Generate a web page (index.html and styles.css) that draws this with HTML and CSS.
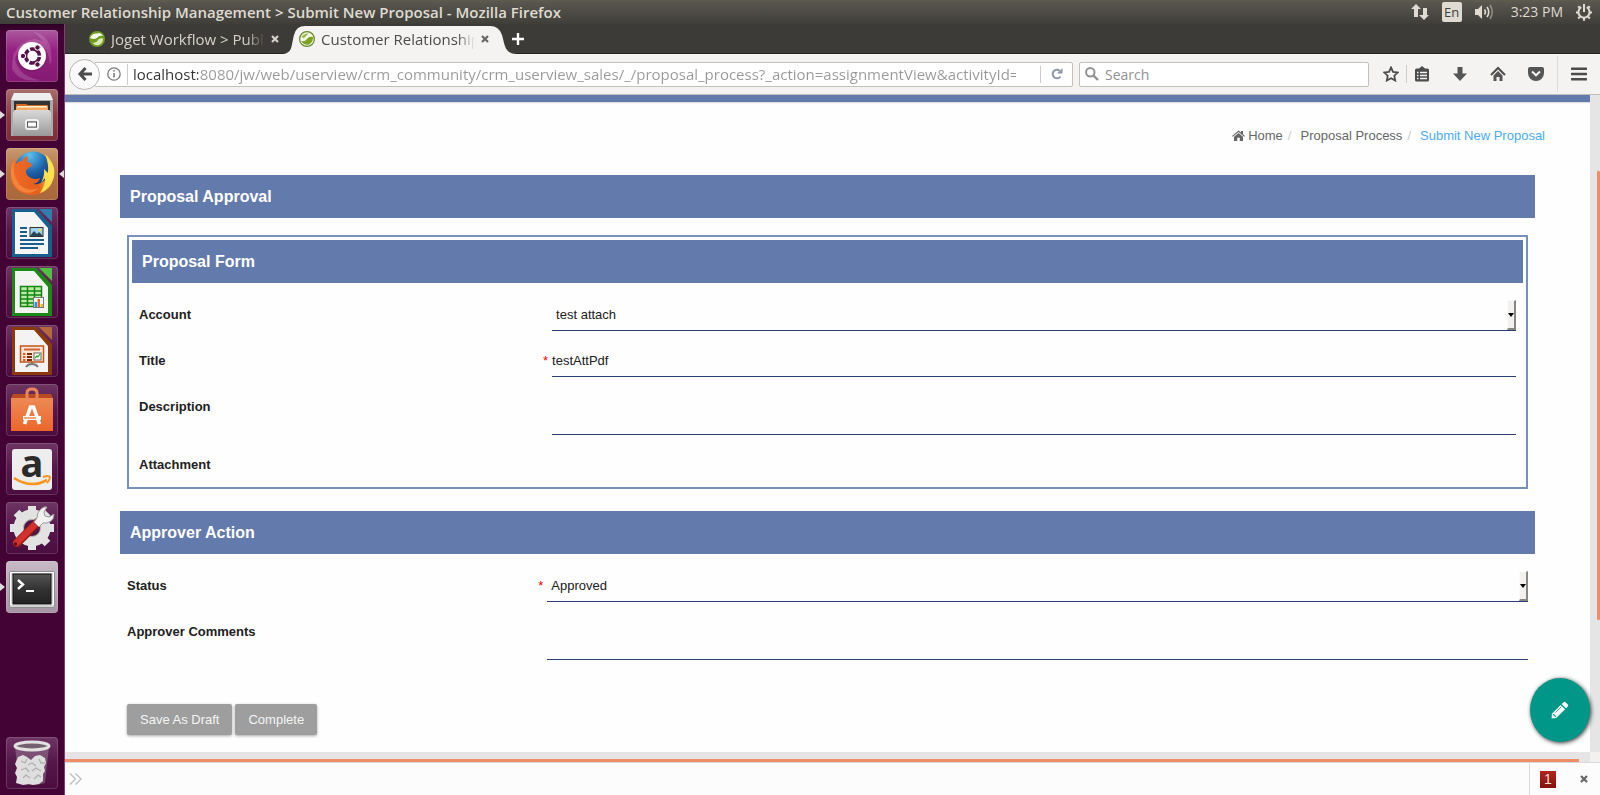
FILE: index.html
```html
<!DOCTYPE html>
<html lang="en">
<head>
<meta charset="utf-8">
<title>Customer Relationship Management &gt; Submit New Proposal</title>
<link rel="stylesheet" href="styles.css">
</head>
<body>
<div class="desktop">
  <header class="panel">
    <span class="panel-title">Customer Relationship Management &gt; Submit New Proposal - Mozilla Firefox</span>
    <div class="indicators">
      <svg class="ind-net" width="18" height="18" viewBox="0 0 18 18"><path fill="#dfdbd2" d="M5 1l5 5H7v8H3V6H0zM12 5h4v7h2l-5 5-5-5h4z"/></svg>
      <span class="lang">En</span>
      <svg class="ind-vol" width="20" height="18" viewBox="0 0 20 18"><path fill="#dfdbd2" d="M0 6h3l4-4v14l-4-4H0z"/><g fill="none" stroke="#dfdbd2" stroke-width="1.6"><path d="M9.500 6.500q2 2.500 0 5"/><path d="M12 4q3.500 5 0 10"/><path d="M15 2q4.500 7 0 14" opacity=".45"/></g></svg>
      <time class="clock">3:23 PM</time>
      <svg class="ind-gear" width="18" height="18" viewBox="0 0 18 18" fill="none" stroke="#dfdbd2"><path stroke-width="2" d="M6.300 4.200a5.600 5.600 0 1 0 5.400 0M9 1v8"/><path stroke-width="2.200" d="M3.200 3.200l1.600 1.600M14.800 3.200l-1.600 1.600M1 9.500h2.500M14.500 9.500H17M3.200 15.500l1.700-1.700M14.800 15.500l-1.700-1.700M9 15v2.800"/></svg>
    </div>
  </header>

  <nav class="launcher" aria-label="Launcher">
    <button class="tile tile-dash" aria-label="Dash">
      <svg viewBox="0 0 52 52"><g fill="#e8b8df" opacity=".22"><path d="M7 42Q3 14 28 9q20 2 17 26-2-20-19-22Q8 16 7 42z"/><path d="M26 1q24 6 18 34-2-24-18-34z"/><path d="M8 20q0 26 26 30-22 3-28-12z"/></g><circle cx="26" cy="27" r="14.500" fill="#5d1550" opacity=".4"/><circle cx="26" cy="26" r="14" fill="#fff"/><circle cx="26.500" cy="26" r="7" fill="none" stroke="#571349" stroke-width="3.600" stroke-dasharray="13 1.660" stroke-dashoffset="-1"/><g fill="#571349" stroke="#fff"><circle cx="17" cy="26" r="2.700"/><circle cx="31.500" cy="17.500" r="2.700"/><circle cx="31.500" cy="34.500" r="2.700"/></g></svg>
    </button>
    <button class="tile tile-files running" aria-label="Files">
      <svg viewBox="0 0 52 52"><defs><linearGradient id="cab" x2="0" y2="1"><stop stop-color="#d9d9d9"/><stop offset="1" stop-color="#999"/></linearGradient></defs><path d="M8 4h36l3 7v36H5V11z" fill="#aaa"/><path d="M8 4h36l3 7H5z" fill="#eee"/><path d="M8 12h36v12H8z" fill="#333"/><path d="M10 15h10l2 1h20v8H10z" fill="#d66a20"/><path d="M10 18h32v6H10z" fill="#f8a95c"/><path d="M11 17h30v1.500H11z" fill="#fff1d8"/><path d="M7 24l1.500-3h35l1.500 3v23H7z" fill="url(#cab)"/><rect x="20" y="31" width="12" height="9" rx="2" fill="#bbb" stroke="#f1f1f1" stroke-width="2"/><rect x="21.500" y="33" width="9" height="5" fill="#fff" stroke="#555"/></svg>
    </button>
    <button class="tile tile-firefox running active" aria-label="Firefox">
      <svg viewBox="0 0 52 52"><defs><radialGradient id="sea" cx=".4" cy=".1" r=".8"><stop stop-color="#5cc3ee"/><stop offset=".6" stop-color="#1c5fa8"/><stop offset="1" stop-color="#123a80"/></radialGradient><linearGradient id="fox" x1="0" x2="1"><stop stop-color="#f0692a"/><stop offset=".65" stop-color="#e3601b"/><stop offset="1" stop-color="#ffcf3b"/></linearGradient></defs><circle cx="27" cy="22" r="18.500" fill="url(#sea)"/><path d="M9 10q-6 10-4 20 3 16 21 17 17-1 21-16 2-8-1-16-1 11-7 17-5 5-12 4 6-1 7-6-4 2-9 0-6-3-5-8 3-3 6-4-1-4-5-4l1-6q-4 1-6 5-4 0-6 3z" fill="url(#fox)"/><path d="M39 6q13 12 8 26-4 10-13 13 6-9 5-15l-4 5q4-8 3-14l4 4q1-9-3-19z" fill="#ffe04c"/><path d="M9 11q-4 14 4 25 9 9 20 4-10 9-21 1Q2 32 6 17z" fill="#f5843a"/></svg>
    </button>
    <button class="tile" aria-label="LibreOffice Writer">
      <svg viewBox="0 0 52 52"><path d="M6 2h24l16 17v31H6z" fill="#165f8f"/><path d="M9 5h19l14 16v26H9z" fill="#f5f5f5"/><path d="M33 2h13v13z" fill="#2f7fae"/><path d="M14 21h7M14 25h7M14 29h7M14 33h24M14 37h24M14 41h18" stroke="#165f8f" stroke-width="2"/><rect x="24" y="20.500" width="13" height="9" fill="#9fd2ee" stroke="#333"/><path d="M24 29l4-5 3 3 2-2 4 4z" fill="#254757"/><circle cx="34" cy="23" r="1.300" fill="#ffd84a"/></svg>
    </button>
    <button class="tile" aria-label="LibreOffice Calc">
      <svg viewBox="0 0 52 52"><path d="M6 2h24l16 17v31H6z" fill="#1a8a15"/><path d="M9 5h19l14 16v26H9z" fill="#f3f3f3"/><path d="M33 2h13v13z" fill="#4fc043"/><path d="M14.500 20.500h21v20h-21z" fill="#b4efa5"/><path d="M14.500 20.500h21v20h-21zM14 25h22M14 29h22M14 33h22M14 37h22M21.500 20v21M28.500 20v21" fill="none" stroke="#178312" stroke-width="1.500"/><rect x="27.500" y="31.500" width="10" height="10" fill="#fff" stroke="#777"/><path d="M28.500 36h2.500v5h-2.500z" fill="#2692dc"/><path d="M31.500 33h2.500v8h-2.500z" fill="#e5662a"/><path d="M34.500 38H37v3h-2.500z" fill="#f1bf18"/></svg>
    </button>
    <button class="tile" aria-label="LibreOffice Impress">
      <svg viewBox="0 0 52 52"><path d="M6 2h24l16 17v31H6z" fill="#8c3a0b"/><path d="M9 5h19l14 16v26H9z" fill="#f3f3f3"/><path d="M33 2h13v13z" fill="#b56a3c"/><rect x="14.500" y="21" width="23" height="16" fill="#fbe5d6" stroke="#c4541a" stroke-width="1.500"/><path d="M18 24.500h16" stroke="#d4642c" stroke-width="2"/><path d="M17 29h2.500M17 32h2.500M17 35h2.500" stroke="#d4642c" stroke-width="1.800"/><path d="M21 29h5M21 32h5M21 35h5" stroke="#7d2b06" stroke-width="1.800"/><rect x="28" y="28" width="7" height="7" fill="#fff" stroke="#666"/><path d="M29 33l2-2 1 1 2-3" fill="none" stroke="#2eaa30" stroke-width="1.300"/><path d="M26 37v3M20 42q2-3 6-3t6 3" fill="none" stroke="#777" stroke-width="2"/></svg>
    </button>
    <button class="tile" aria-label="Ubuntu Software">
      <svg viewBox="0 0 52 52"><defs><linearGradient id="bag" x2="0" y2="1"><stop stop-color="#ee8a54"/><stop offset="1" stop-color="#ec662b"/></linearGradient></defs><path d="M7 10h38l2 4H5z" fill="#b94a1f"/><path d="M5 14h42v33H5z" fill="url(#bag)"/><path d="M21 17V9q0-4 5-4t5 4v8" fill="none" stroke="#e8875c" stroke-width="3"/><path d="M18.500 40l6-17h3l6 17" fill="none" stroke="#fff" stroke-width="3.600"/><path d="M17 34h18" stroke="#fff" stroke-width="4"/><path d="M18 34h12" stroke="#ec6b32" stroke-width="1.200"/></svg>
    </button>
    <button class="tile" aria-label="Amazon">
      <svg viewBox="0 0 52 52"><rect x="6" y="6" width="40" height="41" rx="3" fill="#ededed"/><text x="26" y="34" text-anchor="middle" class="amazon-letter">a</text><path d="M8 35q17 11 33 2" fill="none" stroke="#f7941d" stroke-width="2.600"/><path d="M37 34q6-2 7 0 0 3-3 6" fill="none" stroke="#f7941d" stroke-width="2"/></svg>
    </button>
    <button class="tile" aria-label="System Settings">
      <svg viewBox="0 0 52 52"><circle cx="26" cy="26" r="13.500" fill="none" stroke="#e2e2e2" stroke-width="10"/><g stroke="#e2e2e2" stroke-width="8"><path d="M26 4v8M26 40v8M4 26h8M40 26h8M10.500 10.500l5.500 5.500M36 36l5.500 5.500M10.500 41.500l5.500-5.500M36 16l5.500-5.500"/></g><circle cx="26" cy="26" r="8.500" fill="#4f1745" stroke="#bbb"/><path d="M32 20L11 41" stroke="#8f1712" stroke-width="8.500" stroke-linecap="round"/><path d="M31.500 20L10.500 41" stroke="#d2322b" stroke-width="6.500" stroke-linecap="round"/><circle cx="9.500" cy="42" r="1.700" fill="#5e0e0b"/><path d="M31 16q0-6 4-9 3-3 6-2l-3 5 1 4 4 1 5-3q0 5-3 7-4 3-8 2l-4 4-5-5z" fill="#f1f1f1" stroke="#999"/></svg>
    </button>
    <button class="tile tile-term running" aria-label="Terminal">
      <svg viewBox="0 0 52 52"><defs><linearGradient id="scr" x2="0" y2="1"><stop stop-color="#555"/><stop offset=".5" stop-color="#333"/><stop offset="1" stop-color="#222"/></linearGradient></defs><rect x="3.500" y="10.500" width="45" height="36" rx="1" fill="#d3d3d3" stroke="#8e8e8e"/><path d="M4.500 11.500h43v32h-43z" fill="none" stroke="#fff"/><rect x="7" y="13" width="38" height="30" fill="url(#scr)" stroke="#111"/><path d="M12 19l5 4.500-5 4.500" fill="none" stroke="#fff" stroke-width="2.400"/><path d="M20 30h8" stroke="#fff" stroke-width="2"/></svg>
    </button>
    <button class="tile tile-trash" aria-label="Trash">
      <svg viewBox="0 0 52 52"><path d="M9 10l4 36q13 4 26 0l4-36z" fill="#bba9b8" opacity=".35"/><path d="M12 20l5-2 4 2 4 3 4-4 5-1 5 3 1 5-2 4 1 4-2 3v7l-4 3-6 1-4-1-6 1-7-2 1-6-2-4 2-5-2-4z" fill="#dedede"/><path d="M15 24l4 2 2-4M22 28l4-2 4 3M33 22l2 4 4 0M15 33l5-2 3 4M26 34l4-3 5 3M17 41l3-3 4 3M28 42l4-4 3 2" fill="none" stroke="#b0b0b0" stroke-width="1.300"/><ellipse cx="26" cy="9" rx="17" ry="4" fill="#72616f" stroke="#e2e2e2" stroke-width="3"/></svg>
    </button>
  </nav>

  <div class="browser">
    <div class="tabs">
      <div class="tab">
        <svg class="favicon" viewBox="0 0 16 16"><circle cx="8" cy="8" r="8" fill="#6f9a22"/><path d="M1 7Q3 2 8 2.500 12 1 14 5q-4-1-6 2-3 2-7 0z" fill="#f5f8e8"/><path d="M3 11.500q2 1 5-1 2-4 6-3 .500 4-4 6.500-4 1-7-2.500z" fill="#dfe9b4"/></svg>
        <span class="tab-title">Joget Workflow &gt; Public</span>
        <button class="tab-close" aria-label="Close tab"><svg viewBox="0 0 8 8"><path d="M1 1l6 6M7 1L1 7" stroke="currentColor" stroke-width="2.200"/></svg></button>
      </div>
      <div class="tab tab-active">
        <svg class="tab-shape" width="236" height="28" viewBox="0 0 236 28" preserveAspectRatio="none"><path d="M0 28C12 28 10 20 13 9q2-9 11-9h185q9 0 12 9c3 11 3 19 15 19z" fill="#f4f3f2"/></svg>
        <svg class="favicon" viewBox="0 0 16 16"><circle cx="8" cy="8" r="7.400" fill="#f3f6e4" stroke="#64872b" stroke-width="1.200"/><path d="M2 10q4 1 6-2 2-3 6-2 .500 5-4 7.500-5 1-8-3.500z" fill="#7ea11f"/><path d="M2.500 6q3-4 7-3.500L7 5 5 7z" fill="#93b545"/></svg>
        <span class="tab-title">Customer Relationship</span>
        <button class="tab-close" aria-label="Close tab"><svg viewBox="0 0 8 8"><path d="M1 1l6 6M7 1L1 7" stroke="currentColor" stroke-width="2.200"/></svg></button>
      </div>
      <button class="new-tab" aria-label="New tab"><svg viewBox="0 0 14 14"><path d="M7 1v12M1 7h12" stroke="#fff" stroke-width="2.400"/></svg></button>
    </div>

    <div class="toolbar">
      <button class="back" aria-label="Back"><svg viewBox="0 0 16 16"><path d="M8.500 2L3 8l5.500 6M3 8h12" fill="none" stroke="#4c4c4c" stroke-width="3"/></svg></button>
      <div class="urlbar">
        <svg class="info" viewBox="0 0 14 14"><circle cx="7" cy="7" r="6.200" fill="none" stroke="#7b7b7b" stroke-width="1.300"/><path d="M7 6v4.500M7 3v1.600" stroke="#7b7b7b" stroke-width="1.600"/></svg>
        <input class="url" type="text" aria-label="Address" value="localhost:8080/jw/web/userview/crm_community/crm_userview_sales/_/proposal_process?_action=assignmentView&amp;activityId=4">
        <button class="reload" aria-label="Reload"><svg viewBox="0 0 12 12"><path d="M9.500 8.500A4.300 4.300 0 1 1 8.600 2.600" fill="none" stroke="#8a97a6" stroke-width="2"/><path d="M11.500 0v5.500H6z" fill="#8a97a6"/></svg></button>
      </div>
      <label class="searchbar">
        <svg viewBox="0 0 14 14"><circle cx="5.300" cy="5.300" r="4.200" fill="none" stroke="#929292" stroke-width="2"/><path d="M8.300 8.300l4.700 4.700" stroke="#929292" stroke-width="2.400"/></svg>
        <input type="text" placeholder="Search" aria-label="Search">
      </label>
      <div class="tools">
        <button class="tool" aria-label="Bookmark"><svg viewBox="0 0 16 16"><path d="M8 1.500l2 4.300 4.800.6-3.500 3.300.9 4.800L8 12.200l-4.200 2.300.9-4.800L1.200 6.400 6 5.800z" fill="none" stroke="#4c4c4c" stroke-width="1.800"/></svg></button>
        <button class="tool tool-list" aria-label="Bookmarks list"><svg viewBox="0 0 16 16"><path d="M8 0l3 2.500h2.500q1.500 0 1.500 1.500v10q0 1.500-1.500 1.500h-11Q1 15.500 1 14V4q0-1.500 1.500-1.500H5z" fill="#4c4c4c"/><path d="M3 6.500h1.500M6 6.500h7M3 9.500h1.500M6 9.500h7M3 12.500h1.500M6 12.500h7" stroke="#f4f3f2" stroke-width="1.600"/></svg></button>
        <button class="tool" aria-label="Downloads"><svg viewBox="0 0 16 16"><path d="M5.500 1h5v6.500H15L8 15 1 7.500h4.500z" fill="#555"/></svg></button>
        <button class="tool" aria-label="Home page"><svg viewBox="0 0 16 16"><path d="M1 9l7-7 7 7" fill="none" stroke="#4c4c4c" stroke-width="2"/><path d="M3.500 9.500L8 5l4.500 4.500V15H9.500v-4h-3v4h-3z" fill="#555"/></svg></button>
        <button class="tool" aria-label="Pocket"><svg viewBox="0 0 16 16"><path d="M2 1h12q2 0 2 2v4a8 8 0 0 1-16 0V3q0-2 2-2z" fill="#555"/><path d="M4 5.500L8 9.300l4-3.800" fill="none" stroke="#f4f3f2" stroke-width="2"/></svg></button>
        <button class="tool tool-menu" aria-label="Menu"><svg viewBox="0 0 16 16"><path d="M1 2.800h14M1 8h14M1 13.200h14" stroke="#4c4c4c" stroke-width="2.600" stroke-linecap="round"/></svg></button>
      </div>
    </div>

    <div class="viewport">
      <main class="page">
        <div class="page-bar"></div>
        <nav class="crumbs" aria-label="Breadcrumb">
          <a href="#home"><svg viewBox="0 0 13 11"><path d="M0 6l6.500-5.500L9 2.600V1h2v3.300L13 6l-.7.800-5.800-4.900L.7 6.800z" fill="#666"/><path d="M2 6.800L6.500 3 11 6.800V11H7.800V7.800H5.200V11H2z" fill="#666"/></svg>Home</a><span class="slash">/</span><a href="#process">Proposal Process</a><span class="slash">/</span><a class="current" href="#submit">Submit New Proposal</a>
        </nav>
        <form class="form">
          <h2 class="bar">Proposal Approval</h2>
          <section class="subform">
            <h3 class="bar">Proposal Form</h3>
            <div class="rows">
              <div class="row"><label for="account">Account</label><span class="req"></span><span class="pick"><select id="account"><option>test attach</option></select></span></div>
              <div class="row"><label for="title">Title</label><span class="req">*</span><input class="line" id="title" type="text" value="testAttPdf"></div>
              <div class="row"><label for="description">Description</label><span class="req"></span><textarea class="line" id="description"></textarea></div>
              <div class="row"><span class="label">Attachment</span></div>
            </div>
          </section>
          <h2 class="bar">Approver Action</h2>
          <div class="rows rows-outer">
            <div class="row"><label for="status">Status</label><span class="req">*</span><span class="pick"><select id="status"><option>Approved</option></select></span></div>
            <div class="row"><label for="comments">Approver Comments</label><span class="req"></span><textarea class="line" id="comments"></textarea></div>
          </div>
          <div class="actions">
            <button class="btn" type="button">Save As Draft</button>
            <button class="btn" type="button">Complete</button>
          </div>
        </form>
      </main>
      <div class="vscroll"><div class="vthumb"></div></div>
      <div class="hscroll"><div class="hthumb"></div></div>
      <div class="corner"></div>
      <button class="fab" aria-label="Edit"><svg viewBox="0 0 18 18"><path d="M12.500 1.200q1-1 2 0l2.300 2.300q1 1 0 2L15 7.300 10.700 3z" fill="#fff"/><path d="M9.800 3.900l4.300 4.300-8.900 8.900L.6 17.400l.3-4.600z" fill="#fff"/><path d="M4.500 11.500l6-6" stroke="#009688" stroke-width=".8"/><path d="M2.200 13.200l2.600 2.600" stroke="#009688" stroke-width="1.200"/></svg></button>
    </div>

    <footer class="addonbar">
      <svg class="chev" viewBox="0 0 14 12"><path d="M1 0l6 6-6 6M7 0l6 6-6 6" fill="none" stroke="#bdbdbd" stroke-width="1.400"/></svg>
      <div class="addon-right"><span class="errors">1</span><button class="bar-close" aria-label="Close bar"><svg viewBox="0 0 8 8"><path d="M1 1l6 6M7 1L1 7" stroke="#666" stroke-width="2.200"/></svg></button></div>
    </footer>
  </div>
</div>
</body>
</html>
```

FILE: styles.css
```css
*, *::before, *::after { box-sizing: border-box; }
html, body { height: 100%; margin: 0; }
body { overflow: hidden; font-family: "Liberation Sans", Arial, sans-serif; font-size: 13px; color: #212121; }
button { border: 0; padding: 0; background: none; font: inherit; color: inherit; }
input, select, textarea { font: inherit; color: inherit; border: 0; padding: 0; margin: 0; background: none; outline: 0; border-radius: 0; min-width: 0; }
svg { display: block; }
a { text-decoration: none; color: inherit; }

.desktop { display: grid; height: 100vh; grid-template: 24px minmax(0, 1fr) / 65px minmax(0, 1fr); }
.panel, .tabs, .toolbar { font-family: "Open Sans", "Noto Sans", sans-serif; }

/* Top panel */
.panel { grid-column: 1 / -1; display: flex; align-items: center; justify-content: space-between; padding: 0 7px 0 6px; background: linear-gradient(#5f5d50, #57554d 3px, #3f3e39); color: #dfdbd2; white-space: nowrap; }
.panel-title { font-size: 15px; font-weight: 600; line-height: 24px; }
.indicators { display: flex; align-items: center; }
.lang { margin: 0 13px; width: 20px; height: 20px; border-radius: 2px; background: #dfdbd2; color: #3f3e39; font-size: 13px; line-height: 20px; text-align: center; }
.clock { margin: 0 12px 0 16px; font-size: 14px; line-height: 24px; }

/* Launcher */
.launcher { display: flex; flex-direction: column; gap: 7px; padding: 6px; border-right: 1px solid #823d77; background: linear-gradient(#2d0124, #430335 8px); }
.tile { position: relative; width: 52px; height: 52px; flex: none; border-radius: 4px; background: linear-gradient(#6d3562, #55164a 50%, #4b0c3f); box-shadow: inset 0 0 0 1px rgba(255, 255, 255, .15); }
.tile svg { width: 52px; height: 52px; overflow: visible; }
.tile-dash { background: linear-gradient(#ab5a9e, #942080 40%, #841a73); }
.tile-files { background: linear-gradient(#a5706d, #8a3b41 50%, #7b2d38); }
.tile-firefox { background: linear-gradient(#c99a70, #b17142 50%, #a9683b); }
.tile-term { background: linear-gradient(#c7b9c5, #a595a3); }
.tile-trash { margin-top: auto; }
.running::before { content: ""; position: absolute; left: -6px; top: 22px; border: 4px solid transparent; border-left: 5px solid #ddd; border-right: 0; }
.active::after { content: ""; position: absolute; right: -6px; top: 22px; border: 4px solid transparent; border-right: 5px solid #ddd; border-left: 0; }
.amazon-letter { font: 700 38px "Noto Sans", sans-serif; fill: #2b2b2b; }

/* Browser chrome */
.browser { display: grid; grid-template-rows: 30px 41px minmax(0, 1fr) 33px; min-width: 0; }
.tabs { display: flex; align-items: center; padding-left: 24px; border-bottom: 1px solid #262522; background: #3c3b37; font-size: 15px; }
.tab { position: relative; display: flex; align-items: center; width: 210px; height: 29px; color: #d6d2c9; }
.tab > * { position: relative; }
.tab .tab-shape { position: absolute; left: -18px; top: 2px; }
.tab-active { color: #4c4c4c; }
.favicon { width: 16px; height: 16px; margin-right: 6px; }
.tab-title { width: 154px; overflow: hidden; white-space: nowrap; line-height: 24px; -webkit-mask-image: linear-gradient(90deg, #000 136px, transparent); mask-image: linear-gradient(90deg, #000 136px, transparent); }
.tab-close { width: 8px; height: 8px; margin-left: 6px; color: #d6d2c9; }
.tab-active .tab-close { color: #666; }
.new-tab { width: 14px; margin-left: 2px; }

.toolbar { display: flex; align-items: center; padding: 0 13px 0 0; border-bottom: 1px solid #c0beba; background: #f4f3f2; font-size: 14px; }
.back { position: relative; z-index: 1; display: grid; place-items: center; width: 31px; height: 31px; margin-left: 4px; flex: none; border: 1px solid #b9b7b3; border-radius: 50%; background: #fafafa; }
.back svg { width: 16px; height: 16px; }
.urlbar { display: flex; align-items: center; flex: 1; min-width: 0; height: 25px; margin-left: -6px; padding-left: 12px; border: 1px solid #c2c0bb; border-radius: 2px; background: #fff; }
.info { width: 14px; height: 14px; flex: none; }
.url { flex: 1; height: 21px; margin-left: 6px; padding-left: 5px; border-left: 1px solid #ccc; font-size: 15px; color: transparent; background: linear-gradient(90deg, #333 65px, #999 65px) content-box; -webkit-background-clip: text; background-clip: text; }
.reload { display: grid; place-items: center; width: 32px; height: 17px; margin-left: 24px; border-left: 1px solid #ccc; }
.reload svg { width: 12px; height: 12px; }
.searchbar { display: flex; align-items: center; gap: 6px; width: 290px; height: 25px; margin-left: 6px; padding: 0 5px; border: 1px solid #c2c0bb; border-radius: 2px; background: #fff; }
.searchbar svg { width: 14px; height: 14px; flex: none; }
.searchbar input { flex: 1; height: 22px; }
.searchbar input::placeholder { color: #929292; opacity: 1; }
.tools { display: flex; align-items: center; gap: 22px; margin-left: 14px; }
.tool { width: 16px; height: 16px; }
.tool svg { width: 16px; height: 16px; }
.tool-list { width: 24px; height: 18px; margin-left: -15px; padding-left: 7px; border-left: 1px solid #ccc; }
.tool-menu { width: 30px; height: 36px; margin-left: -9px; padding-left: 13px; border-left: 1px solid #dcdad7; }

/* Page */
.viewport { position: relative; display: grid; grid-template: minmax(0, 1fr) 10px / minmax(0, 1fr) 10px; min-height: 0; }
.page { overflow: hidden; background: #fefefe; }
.page-bar { height: 7px; background: #637aad; box-shadow: 0 1px 1px #ddd; }
.crumbs { display: flex; align-items: center; justify-content: flex-end; height: 20px; margin: 23px 45px 0 0; color: #666; white-space: nowrap; }
.crumbs a { display: flex; align-items: center; }
.crumbs svg { width: 13px; height: 11px; margin-right: 3px; }
.slash { margin: 0 9px 0 5px; color: #ccc; }
.crumbs .current { color: #4bacf5; }
.form { margin: 30px 55px 0; }
.bar { height: 43px; margin: 0; padding: 0 10px; background: #637aad; color: #fff; font-size: 16px; font-weight: 700; line-height: 43px; }
.subform { margin: 17px 7px 22px; padding: 3px; border: 2px solid #788ebb; }
.rows { padding: 17px 7px 0; }
.row { display: grid; grid-template-columns: 30% minmax(0, 1fr); margin-bottom: 15px; }
.row:last-child { margin-bottom: 0; }
.row > label, .row > .label { grid-area: 1 / 1; font-weight: 700; line-height: 30px; }
.subform .row:last-child { margin-bottom: 4px; }
.req { grid-area: 1 / 1; justify-self: end; margin-right: 4px; color: #f00; line-height: 30px; }
.line { width: 100%; height: 31px; padding-bottom: 2px; border-bottom: 1px solid #2b4171; }
textarea.line { display: block; height: 43px; resize: none; }
.pick { position: relative; display: block; }
.pick select { display: block; width: 100%; height: 31px; padding: 0 0 2px 4px; border-bottom: 1px solid #2b4171; appearance: none; }
.pick::before { content: ""; position: absolute; right: 0; top: 0; width: 9px; height: 30px; border-style: solid; border-width: 1px 2px 2px 1px; border-color: #fafafa #888682 #888682 #fafafa; background: #f2f1f0; pointer-events: none; }
.pick::after { content: ""; position: absolute; right: 2px; top: 13px; border: 3px solid transparent; border-top: 4px solid #000; border-bottom: 0; pointer-events: none; }
.actions { display: flex; gap: 3px; margin: 44px 7px 0; }
.btn { height: 31px; padding: 0 13px; border-radius: 2px; background: #9e9e9e; color: #f5f5f5; box-shadow: 0 1px 3px rgba(0, 0, 0, .35); }

.vscroll, .hscroll { background: #e5e5e5; }
.vscroll { display: flex; justify-content: flex-end; padding-top: 76px; }
.vthumb { width: 3px; height: 449px; border-radius: 1px; background: #f08d66; }
.hscroll { display: flex; align-items: flex-end; padding-right: 11px; }
.hthumb { width: 100%; height: 3px; background: #f08d66; }
.corner { background: #f2f1f0; }
.fab { position: absolute; right: 10px; bottom: 20px; display: grid; place-items: center; width: 60px; height: 64px; border-radius: 50%; background: #009688; box-shadow: 1px 1px 4px #333; }
.fab svg { width: 18px; height: 18px; }

.addonbar { display: flex; align-items: center; justify-content: space-between; padding-left: 4px; border-top: 1px solid #dadada; background: #fcfcfc; }
.chev { width: 13px; height: 12px; }
.addon-right { display: flex; align-items: center; align-self: stretch; gap: 24px; width: 71px; padding-left: 10px; border-left: 1px solid #d7dade; }
.errors { width: 16px; height: 17px; background: linear-gradient(#b3241c, #85120c); color: #f1dfcf; font-size: 14px; line-height: 17px; text-align: center; }
.bar-close { width: 8px; height: 8px; }
```
